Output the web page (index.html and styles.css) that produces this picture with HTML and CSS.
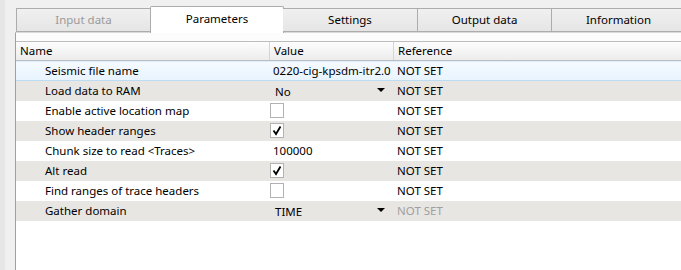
FILE: index.html
```html
<!DOCTYPE html>
<html lang="en">
<head>
    <meta charset="UTF-8">
    <title>Parameters</title>
    <link rel="stylesheet" href="styles.css">
</head>
<body>
    <div class="window">
        <div class="tabs">
            <div class="tab disabled">Input data</div>
            <div class="tab active">Parameters</div>
            <div class="tab">Settings</div>
            <div class="tab">Output data</div>
            <div class="tab last">Information</div>
        </div>

        <div class="pane">
            <div class="tree">
                <div class="row header">
                    <div class="cell name">Name</div>
                    <div class="cell value">Value</div>
                    <div class="cell ref">Reference</div>
                </div>

                <div class="row selected">
                    <div class="cell name">Seismic file name</div>
                    <div class="cell value">0220-cig-kpsdm-itr2.0</div>
                    <div class="cell ref">NOT SET</div>
                </div>
                <div class="row alt">
                    <div class="cell name">Load data to RAM</div>
                    <div class="cell value combo"><span>No</span><i class="arrow"></i></div>
                    <div class="cell ref">NOT SET</div>
                </div>
                <div class="row">
                    <div class="cell name">Enable active location map</div>
                    <div class="cell value"><span class="check"></span></div>
                    <div class="cell ref">NOT SET</div>
                </div>
                <div class="row alt">
                    <div class="cell name">Show header ranges</div>
                    <div class="cell value"><span class="check"><svg viewBox="0 0 12 13"><polyline points="2.5,6.5 5,10 9.5,2.5"/></svg></span></div>
                    <div class="cell ref">NOT SET</div>
                </div>
                <div class="row">
                    <div class="cell name">Chunk size to read &lt;Traces&gt;</div>
                    <div class="cell value">100000</div>
                    <div class="cell ref">NOT SET</div>
                </div>
                <div class="row alt">
                    <div class="cell name">Alt read</div>
                    <div class="cell value"><span class="check"><svg viewBox="0 0 12 13"><polyline points="2.5,6.5 5,10 9.5,2.5"/></svg></span></div>
                    <div class="cell ref">NOT SET</div>
                </div>
                <div class="row">
                    <div class="cell name">Find ranges of trace headers</div>
                    <div class="cell value"><span class="check"></span></div>
                    <div class="cell ref">NOT SET</div>
                </div>
                <div class="row alt">
                    <div class="cell name">Gather domain</div>
                    <div class="cell value combo"><span>TIME</span><i class="arrow"></i></div>
                    <div class="cell ref muted">NOT SET</div>
                </div>
            </div>
        </div>
    </div>
</body>
</html>
```

FILE: styles.css
```css
body {
    margin: 0;
    font-family: "Noto Sans", "Open Sans", sans-serif;
    font-size: 11.5px;
    color: #000;
    background-color: #f0f0f0;
}
.window {
    height: 270px;
    display: flex;
    flex-direction: column;
    overflow: hidden;
    border-left: 5px solid #e6e6e6;
}
.tabs {
    display: flex;
    align-items: flex-end;
    height: 32px;
    padding-left: 11px;
    position: relative;
    z-index: 1;
}
.tab {
    flex-shrink: 0;
    box-sizing: border-box;
    width: 134px;
    height: 24px;
    border: 1px solid #acacac;
    border-right: none;
    background: linear-gradient(#f0f0f0, #e5e5e5);
    text-align: center;
    line-height: 22px;
}
.tab.disabled {
    color: #9a9a9a;
}
.tab.active {
    height: 27px;
    margin-bottom: -1px;
    margin-right: -1px;
    border-right: 1px solid #acacac;
    border-bottom: none;
    border-radius: 2px 2px 0 0;
    background: #fff;
    line-height: 24px;
}
.tab.active + .tab {
    border-left: none;
}
.pane {
    flex: 1;
    margin-left: 10px;
    border-top: 1px solid #d9d9d9;
    border-left: 1px solid #a0a0a0;
    background: #fcfcfc;
    padding-top: 8px;
}
.tree {
    height: 100%;
    background: #fff;
}
.row {
    display: flex;
    height: 20px;
    line-height: 19px;
    box-sizing: border-box;
    white-space: nowrap;
}
.row.header {
    border-top: 1px solid #bdbdbd;
    border-bottom: 1px solid #bdbdbd;
    background: linear-gradient(#fdfdfd, #ececec);
    line-height: 17px;
}
.row.header .cell {
    padding-left: 4px;
}
.row.header .value, .row.header .ref {
    border-left: 1px solid #d5d5d5;
}
.row.alt {
    background-color: #e8e6e3;
}
.row.selected {
    background: linear-gradient(#f5faff, #e8f4fe);
    border-top: 1px solid #dcedfb;
    border-bottom: 1px solid #bcdcf4;
    line-height: 18px;
}
.cell {
    box-sizing: border-box;
    overflow: hidden;
}
.name {
    width: 253px;
    padding-left: 29px;
}
.value {
    width: 124px;
    padding-left: 4px;
}
.ref {
    flex: 1;
    padding-left: 4px;
}
.muted {
    color: #a0a0a0;
}
.combo {
    display: flex;
    align-items: center;
    padding-left: 6px;
}
.combo span {
    flex: 1;
}
.arrow {
    width: 0;
    height: 0;
    margin-right: 8px;
    margin-top: -3px;
    border-left: 4px solid transparent;
    border-right: 4px solid transparent;
    border-top: 4px solid #000;
}
.check {
    display: inline-block;
    box-sizing: border-box;
    width: 14px;
    height: 15px;
    margin-top: 2px;
    margin-left: -3px;
    border: 1px solid #b2b2b2;
    background: #fff;
    vertical-align: top;
}
.check svg {
    display: block;
    width: 12px;
    height: 13px;
    fill: none;
    stroke: #000;
    stroke-width: 1.8;
}
```
